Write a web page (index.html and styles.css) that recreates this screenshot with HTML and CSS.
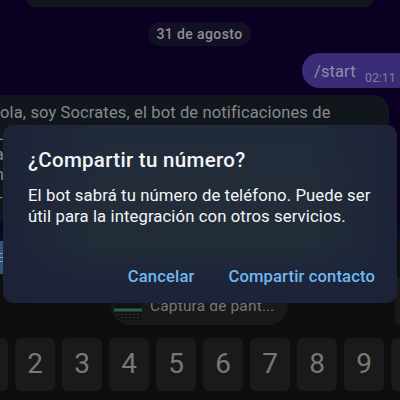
FILE: index.html
```html
<!DOCTYPE html>
<html lang="es">
<head>
<meta charset="utf-8">
<title>Compartir tu número</title>
<link rel="stylesheet" href="styles.css">
</head>
<body>
<main class="screen">
  <section class="chat">
    <div class="previous"></div>
    <div class="date"><span>31 de agosto</span></div>
    <div class="sent"><span class="command">/start</span><time>02:11</time></div>
    <div class="received">
      <p class="greeting">ola, soy Socrates, el bot de notificaciones de</p>
      <p class="rest">L</p>
      <p class="rest">a</p>
      <p class="rest">n</p>
      <p class="rest last">-</p>
    </div>
    <div class="bot-menu"><i></i><i></i><i></i></div>
  </section>
  <section class="keyboard">
    <div class="suggestions">
      <div class="clip">
        <svg class="thumb" width="28" height="24" viewBox="0 0 28 24">
          <path d="M0 0H28V24H10Q3 21 0 14Z" fill="#101214"/>
          <path d="M0 14H28" stroke="#2f6048" stroke-width="3"/>
          <path d="M3 18.5H27M7 21.5H28" stroke="#30343a" stroke-width="1" stroke-dasharray="2 2"/>
        </svg>
        <span>Captura de pant...</span>
      </div>
      <div class="next-clip"></div>
    </div>
    <div class="keys">
      <b></b><b>2</b><b>3</b><b>4</b><b>5</b><b>6</b><b>7</b><b>8</b><b>9</b><b></b>
    </div>
  </section>
  <div class="dialog" role="dialog">
    <h1>¿Compartir tu número?</h1>
    <p>El bot sabrá tu número de teléfono. Puede ser<br>útil para la integración con otros servicios.</p>
    <div class="actions"><button>Cancelar</button><button>Compartir contacto</button></div>
  </div>
</main>
</body>
</html>
```
FILE: styles.css
```css
* { box-sizing: border-box; }
body { margin: 0; font-family: Roboto, "Liberation Sans", sans-serif; }
p, h1 { margin: 0; }
.screen { position: relative; width: 400px; height: 400px; overflow: hidden; background: #0e0e0e; white-space: nowrap; }
.chat { height: 278px; background: linear-gradient(#0c0022 0 220px, #080a24 234px, #0e0e0e 246px); overflow: hidden; }
.previous { width: 346px; height: 7px; margin-left: 27px; background: #11161d; border-radius: 0 0 14px 14px; }
.date { width: 103px; height: 24px; margin: 15px 0 0 148px; border-radius: 12px; background: #130f24; color: #8f8d97; font-size: 14px; font-weight: 500; line-height: 24px; text-align: center; letter-spacing: .4px; }
.sent { display: flex; width: 100px; height: 35px; margin: 7px 0 0 302px; padding-left: 12px; border-radius: 18px 0 0 18px; background: #392b76; color: #8f8ba8; }
.command { width: 51px; font-size: 16.5px; line-height: 37px; letter-spacing: .1px; }
.sent time { font-size: 12.3px; line-height: 50px; color: #817b9f; }
.received { width: 389px; height: 126px; margin-top: 7px; background: #11161d; border-radius: 0 16px 0 0; color: #858a90; }
.greeting { height: 30px; line-height: 36px; font-size: 16.5px; letter-spacing: .13px; }
.rest { height: 20px; line-height: 20px; font-size: 16px; margin-left: -5px; }
.rest.last { margin-left: -2px; line-height: 26px; }
.bot-menu { display: flex; flex-direction: column; gap: 3px; justify-content: center; width: 14px; height: 33px; margin-top: 20px; background: #315778; }
.bot-menu i { height: 1px; width: 3px; background: #829aae; }
.suggestions { display: flex; justify-content: space-between; height: 60px; padding-left: 111px; }
.clip { display: flex; width: 177px; height: 47px; overflow: hidden; border-radius: 0 0 20px 20px; background: #191919; color: #777; font-size: 15.5px; line-height: 57px; letter-spacing: .15px; }
.thumb { margin: 18px 8px 0 3px; }
.next-clip { width: 5px; height: 47px; border-radius: 0 0 0 16px; background: #191919; }
.keys { display: flex; gap: 7px; width: 470px; margin-left: -32px; }
.keys b { width: 40px; height: 53px; border-radius: 6px; background: #1a1a1a; color: #787878; text-align: center; font-size: 28px; line-height: 51px; font-weight: 400; }
.dialog { position: absolute; top: 125px; left: 3px; width: 394px; height: 178px; padding: 23px 22px 0 25px; border-radius: 10px; color: #f2f5f7; background: linear-gradient(90deg, #1c2338 0, #1c233800 25%, #1c233800 78%, #1c2338 100%), linear-gradient(#202a3a 0, #232c38 40%, #222d38 65%, #1d243a 90%); }
.dialog h1 { height: 38px; font-size: 20.5px; line-height: 24px; font-weight: 500; letter-spacing: .3px; }
.dialog p { height: 70px; font-size: 16.7px; line-height: 20.5px; letter-spacing: .1px; }
.actions { display: flex; gap: 34px; justify-content: flex-end; }
.actions button { padding: 0; border: 0; background: none; color: #70b8ed; font: 500 16.6px/41px Roboto, sans-serif; letter-spacing: .13px; }
```
